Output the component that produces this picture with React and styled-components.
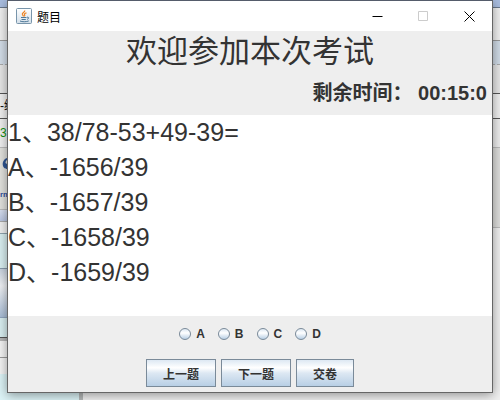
import React, { Fragment, useState } from 'react';
import styled, { createGlobalStyle, css } from 'styled-components';

const LINES = [
  '1、38/78-53+49-39=',
  'A、-1656/39',
  'B、-1657/39',
  'C、-1658/39',
  'D、-1659/39',
];
const CHOICES = ['A', 'B', 'C', 'D'];

// strips of the windows that lie under the dialog
const LEFT_STRIPS = [
  { size: 8, bg: '#a9bddf', line: '#69788c' },
  { size: 33, bg: '#f0f0f0', line: '#999' },
  { size: 24, bg: '#d3dde8', line: '#aaa', dashed: true },
  { size: 29, bg: '#e6e6e6', line: '#555' },
  { size: 25, bg: '#f0f0f0', line: '#555', text: '-绘' },
  { size: 29, bg: '#f0f0f0', line: '#bbb', text: '3', color: '#129012' },
  { size: 32, bg: '#e2e2de', icon: true },
  { size: 30, bg: '#e2e2de', line: '#bbb', text: 'rm', color: '#2f4f9f', small: true },
  { size: 12, bg: 'linear-gradient(#d8e0f0, #b9c6e2)', line: '#aaa' },
  { size: 12, bg: '#f0f0f0', line: '#8fa3ad' },
  { size: 35, bg: '#d9eff1', line: '#8899aa' },
  { size: 49, bg: 'linear-gradient(#c8d2de, #f0f2f5 35%, #a9bdd6)', line: '#8fa5bf' },
  { size: 20, bg: '#d9eff1', line: '#555' },
  { size: 3, bg: '#b5b5b5' },
  { size: 17, bg: '#f4f4f4', line: '#999' },
  { size: 16, bg: '#f4f4f4' },
];

const RIGHT_STRIPS = [
  { size: 8, bg: '#a9bddf', line: '#69788c' },
  { size: 33, bg: '#f0f0f0', line: '#999' },
  { size: 24, bg: '#d0dbe6', line: '#aaa', dashed: true },
  { size: 29, bg: '#e6e6e6', line: '#555' },
  { size: 25, bg: '#f0f0f0', line: '#555' },
  { size: 29, bg: '#ededed', line: '#bbb' },
  { size: 80, bg: '#dededc', line: '#bbb' },
];

function Strips({ items }) {
  return (
    <Fragment>
      {items.map((item, i) => (
        <Strip key={i} $size={item.size} $bg={item.bg} $line={item.line} $dashed={item.dashed}>
          {item.text && (
            <StripText $color={item.color} $small={item.small}>
              {item.text}
            </StripText>
          )}
          {item.icon && (
            <svg width='7' height='14' viewBox='0 0 7 14'>
              <path d='M7 1C4 2 2 5 3 9C4 12 7 12 7 12V7L5.500 6C5.500 4.500 6 3.500 7 3Z' fill='#2f5694' />
            </svg>
          )}
        </Strip>
      ))}
    </Fragment>
  );
}

function JavaIcon() {
  return (
    <svg width='16' height='16' viewBox='0 0 16 16' aria-hidden='true'>
      <defs>
        <linearGradient id='tile' x1='0' y1='0' x2='0' y2='1'>
          <stop offset='0' stopColor='#fff' />
          <stop offset='1' stopColor='#d3dfe9' />
        </linearGradient>
      </defs>
      <rect x='0.5' y='0.5' width='15' height='15' rx='1' fill='url(#tile)' stroke='#7895ab' />
      <path
        d='M8.800 2.500C9 4.500 5.700 4.800 6.400 6.500L7.600 8.300M10.500 4.800C8.800 5.300 8 6 8.700 6.800C9 7.300 8.700 7.800 8.300 8.300'
        fill='none'
        stroke='#ee8322'
        strokeWidth='1.2'
      />
      <path
        d='M5 9.500H10.500M5.500 11.500H9.800M11 9.200C13.400 8.700 13 11 11 11.300M4 13C6 14 10.500 14 12.800 12.900'
        fill='none'
        stroke='#4d7898'
      />
    </svg>
  );
}

function App() {
  const [answer, setAnswer] = useState('');

  return (
    <Desktop>
      <GlobalStyle />
      <Backdrop aria-hidden='true'>
        <LeftWindow>
          <Strips items={LEFT_STRIPS} />
          <Remainder />
        </LeftWindow>
        <RightWindow>
          <Strips items={RIGHT_STRIPS} />
        </RightWindow>
      </Backdrop>
      <Dialog role='dialog' aria-labelledby='dialog-title'>
        <TitleBar>
          <JavaIcon />
          <Title id='dialog-title'>题目</Title>
          <WindowButton type='button' aria-label='最小化'>
            <svg width='11' height='11' viewBox='0 0 11 11'>
              <path d='M0.500 5.500H10.500' />
            </svg>
          </WindowButton>
          <WindowButton type='button' aria-label='最大化' disabled>
            <svg width='11' height='11' viewBox='0 0 11 11'>
              <path d='M0.500 0.500H9.500V9.500H0.500Z' />
            </svg>
          </WindowButton>
          <WindowButton type='button' aria-label='关闭'>
            <svg width='11' height='11' viewBox='0 0 11 11'>
              <path d='M0.500 0.500L10.500 10.500M10.500 0.500L0.500 10.500' />
            </svg>
          </WindowButton>
        </TitleBar>
        <Header>
          <Welcome>欢迎参加本次考试</Welcome>
          <Timer>剩余时间： 00:15:0</Timer>
        </Header>
        <Question>
          {LINES.map((line) => (
            <p key={line}>{line}</p>
          ))}
        </Question>
        <Footer>
          <Choices>
            {CHOICES.map((choice) => (
              <Choice key={choice}>
                <Radio
                  type='radio'
                  name='answer'
                  value={choice}
                  checked={answer === choice}
                  onChange={() => setAnswer(choice)}
                />
                {choice}
              </Choice>
            ))}
          </Choices>
          <ButtonGroup>
            <Button type='button'>上一题</Button>
            <Button type='button'>下一题</Button>
            <Button type='button'>交卷</Button>
          </ButtonGroup>
        </Footer>
      </Dialog>
    </Desktop>
  );
}

export default App;

const GlobalStyle = createGlobalStyle`
  * {
    box-sizing: border-box;
  }
  body {
    margin: 0;
    font-family: 'Liberation Sans', 'Noto Sans CJK SC', sans-serif;
    color: #333;
  }
  p, h1, h2 {
    margin: 0;
  }
`;

const Desktop = styled.div`
  display: grid;
  min-height: 100vh;
  overflow: hidden;
`;

const Backdrop = styled.div`
  grid-area: 1 / 1;
  display: flex;
  background-color: #f0f0f0;
`;

const LeftWindow = styled.div`
  display: flex;
  flex-direction: column;
  width: 83px;
  overflow: hidden;
`;

const RightWindow = styled.div`
  flex: 1;
`;

const Strip = styled.div`
  display: flex;
  align-items: center;
  height: ${({ $size }) => $size}px;
  background: ${({ $bg }) => $bg};
  ${({ $line, $dashed }) =>
    $line &&
    css`
      border-bottom: 1px ${$dashed ? 'dashed' : 'solid'} ${$line};
    `};
`;

const StripText = styled.span`
  width: 7px;
  overflow: hidden;
  color: ${({ $color }) => $color || '#111'};
  font-size: ${({ $small }) => ($small ? 8 : 12)}px;
  font-weight: ${({ $small }) => ($small ? 700 : 400)};
  line-height: 18px;
  white-space: nowrap;
`;

const Remainder = styled.div`
  flex: 1;
  border-right: 4px solid #b5b8b8;
  background-color: #dcf3f6;
`;

const Dialog = styled.main`
  grid-area: 1 / 1;
  z-index: 1;
  display: flex;
  flex-direction: column;
  margin: 0 7px 7px;
  border: 1px solid #666;
  border-top-color: #555c6b;
  background-color: #eee;
  box-shadow: 0 2px 10px rgba(0, 0, 0, 0.4);
`;

const TitleBar = styled.header`
  display: flex;
  align-items: center;
  height: 30px;
  padding-left: 8px;
  background-color: #fff;
`;

const Title = styled.h1`
  flex: 1;
  margin-left: 5px;
  color: #000;
  font-size: 12px;
  font-weight: 400;
`;

const WindowButton = styled.button`
  display: flex;
  align-items: center;
  justify-content: center;
  width: 46px;
  height: 30px;
  padding: 0;
  border: none;
  background: none;
  svg {
    fill: none;
    stroke: #000;
  }
  &:disabled svg {
    stroke: #ccc;
  }
`;

const Header = styled.section`
  height: 84px;
`;

const Welcome = styled.h2`
  font-size: 31px;
  font-weight: 400;
  line-height: 42px;
  text-align: center;
`;

const Timer = styled.p`
  padding-right: 5px;
  font-size: 20px;
  font-weight: 700;
  line-height: 40px;
  text-align: right;
`;

const Question = styled.section`
  flex: 1;
  background-color: #fff;
  font-size: 25px;
  line-height: 35px;
`;

const Footer = styled.footer`
  padding: 10px 0 5px;
  font-size: 12px;
  font-weight: 700;
`;

const Choices = styled.div`
  display: flex;
  justify-content: center;
  gap: 13px;
  height: 16px;
`;

const Choice = styled.label`
  display: flex;
  align-items: center;
  gap: 5px;
`;

const Radio = styled.input`
  appearance: none;
  width: 12px;
  height: 12px;
  margin: 0;
  border: 1px solid #7a8a99;
  border-radius: 50%;
  background: linear-gradient(#dde8f3, #fff 40%, #b8cfe5);
  &:checked {
    background: radial-gradient(#333 3px, #dde8f3 4px);
  }
`;

const ButtonGroup = styled.div`
  display: flex;
  justify-content: center;
  gap: 5px;
  margin-top: 17px;
`;

const Button = styled.button`
  height: 28px;
  padding: 0 16px;
  border: 1px solid #7a8a99;
  outline: 1px solid #7a8a99;
  outline-offset: -1px;
  background: linear-gradient(#dde8f3, #fff 30%, #dde8f3 50%, #b8cfe5);
  color: #333;
  font-family: inherit;
  font-size: 12px;
  font-weight: 700;
`;
